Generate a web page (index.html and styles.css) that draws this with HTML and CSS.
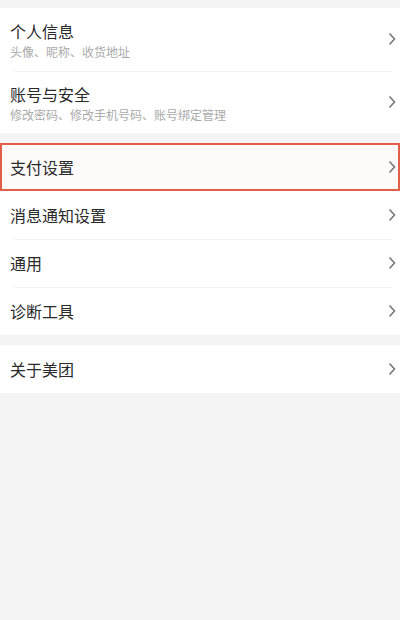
FILE: index.html
```html
<!DOCTYPE html>
<html lang="zh-CN">
<head>
    <meta charset="UTF-8">
    <meta name="viewport" content="width=device-width, initial-scale=1.0">
    <title>设置</title>
    <link rel="stylesheet" href="styles.css">
</head>
<body>
    <div class="page">
        <div class="group">
            <div class="item item-tall">
                <div class="text">
                    <div class="title">个人信息</div>
                    <div class="sub">头像、昵称、收货地址</div>
                </div>
                <svg class="arrow" width="8" height="14" viewBox="0 0 8 14"><polyline points="1.5,1.5 6.5,7 1.5,12.5"/></svg>
            </div>
            <div class="item item-tall">
                <div class="text">
                    <div class="title">账号与安全</div>
                    <div class="sub">修改密码、修改手机号码、账号绑定管理</div>
                </div>
                <svg class="arrow" width="8" height="14" viewBox="0 0 8 14"><polyline points="1.5,1.5 6.5,7 1.5,12.5"/></svg>
            </div>
        </div>

        <div class="group">
            <div class="item active">
                <div class="title">支付设置</div>
                <svg class="arrow" width="8" height="14" viewBox="0 0 8 14"><polyline points="1.5,1.5 6.5,7 1.5,12.5"/></svg>
            </div>
            <div class="item">
                <div class="title">消息通知设置</div>
                <svg class="arrow" width="8" height="14" viewBox="0 0 8 14"><polyline points="1.5,1.5 6.5,7 1.5,12.5"/></svg>
            </div>
            <div class="item">
                <div class="title">通用</div>
                <svg class="arrow" width="8" height="14" viewBox="0 0 8 14"><polyline points="1.5,1.5 6.5,7 1.5,12.5"/></svg>
            </div>
            <div class="item">
                <div class="title">诊断工具</div>
                <svg class="arrow" width="8" height="14" viewBox="0 0 8 14"><polyline points="1.5,1.5 6.5,7 1.5,12.5"/></svg>
            </div>
        </div>

        <div class="group">
            <div class="item">
                <div class="title">关于美团</div>
                <svg class="arrow" width="8" height="14" viewBox="0 0 8 14"><polyline points="1.5,1.5 6.5,7 1.5,12.5"/></svg>
            </div>
        </div>
    </div>
</body>
</html>
```

FILE: styles.css
```css
body {
    margin: 0;
    background-color: #f4f4f4;
    font-family: "Noto Sans CJK SC", "Noto Sans", sans-serif;
}

.page {
    padding-top: 8px;
    display: flex;
    flex-direction: column;
    gap: 10px;
}

.group {
    background-color: #fff;
}

.item {
    position: relative;
    height: 48px;
    padding: 0 4px 0 10px;
    display: flex;
    align-items: center;
    justify-content: space-between;
    box-sizing: border-box;
}

.item + .item::before {
    content: "";
    position: absolute;
    top: 0;
    left: 15px;
    right: 8px;
    height: 1px;
    background-color: #f1f1f1;
}

.item-tall {
    height: 62.5px;
}

.text {
    display: flex;
    flex-direction: column;
    gap: 3px;
    padding-top: 2px;
}

.title {
    font-size: 16px;
    color: #2a2a2a;
    line-height: 20px;
}

.sub {
    font-size: 12px;
    color: #aaa;
    line-height: 15px;
}

.active {
    border: 2px solid #e25d4a;
    background-color: #fffafa;
    padding-left: 8px;
    padding-right: 2px;
}

.active + .item::before {
    display: none;
}

.arrow {
    fill: none;
    stroke: #777;
    stroke-width: 1.6;
}
```
